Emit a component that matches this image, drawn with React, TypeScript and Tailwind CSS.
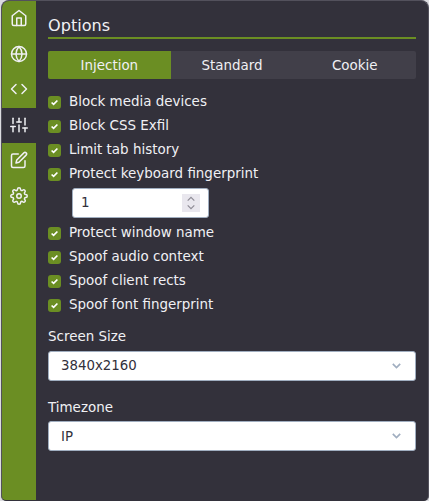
import { FiHome, FiGlobe, FiCode, FiSliders, FiEdit, FiSettings } from "react-icons/fi";

const nav = [FiHome, FiGlobe, FiCode, FiSliders, FiEdit, FiSettings];

function Check({ label }: { label: string }) {
  return (
    <label className="flex h-6 items-center">
      <span className="mt-[2px] flex size-[13px] items-center justify-center rounded-[3px] bg-[#6b8e23]">
        <svg width="7" height="7" viewBox="0 0 7 7" fill="none" stroke="#fff" strokeWidth="1.7">
          <path d="M0.6 3.5 2.6 5.4 6.4 1.5" />
        </svg>
      </span>
      <span className="ml-2 pt-[2px]">{label}</span>
    </label>
  );
}

function Select({ value, textClass = "" }: { value: string; textClass?: string }) {
  return (
    <div className="flex h-[30px] items-center justify-between rounded-[3px] border border-[#a0aec0] bg-white pr-[14px] pl-3 text-[13.33px] text-[#32303b]">
      <span className={textClass}>{value}</span>
      <svg width="9" height="6" viewBox="0 0 9 6" fill="none" stroke="#a0aec0" strokeWidth="1.7">
        <path d="M0.8 0.9 4.5 4.5 8.2 0.9" />
      </svg>
    </div>
  );
}

export default function App() {
  return (
    <div className="h-[501px] w-[429px] bg-[#dcdce0] pl-px font-['DejaVu_Sans',sans-serif] text-[13.45px] leading-[18px] text-[#f0f0f4]">
      <div className="flex h-full overflow-hidden rounded-t-[8px] rounded-b-[5px] border border-[#53515c] border-b-[#33313b] bg-[#33313b]">
        <nav className="w-[34px] shrink-0 bg-[#6b8e23]">
          {nav.map((Icon, i) => (
            <div
              key={i}
              className={"flex h-[35.5px] items-center justify-center pb-px " + (i === 3 ? "bg-[#33313b]" : "")}
            >
              <Icon size={18} />
            </div>
          ))}
        </nav>
        <main className="min-w-0 flex-1 pr-3 pl-3">
          <h1 className="flex h-[38px] items-end border-b-2 border-[#6b8e23] pb-px text-[16.1px] leading-5">Options</h1>
          <div className="mt-3 flex h-7 overflow-hidden rounded-[2px] bg-[#413f49]">
            <div className="flex flex-1 items-center justify-center bg-[#6b8e23] pt-[2px]">Injection</div>
            <div className="flex flex-1 items-center justify-center pt-[2px]">Standard</div>
            <div className="flex flex-1 items-center justify-center pt-[2px]">Cookie</div>
          </div>
          <div className="mt-[10px]">
            <Check label="Block media devices" />
            <Check label="Block CSS Exfil" />
            <Check label="Limit tab history" />
            <Check label="Protect keyboard fingerprint" />
            <div className="mt-[3px] mb-[2px] ml-6 flex h-[30px] w-[137px] items-center justify-between rounded-[3px] border border-[#a0aec0] bg-white px-2 text-[#32303b]">
              <span>1</span>
              <span className="flex h-[18px] w-[18px] items-center justify-center bg-[#e9e7ee]">
                <svg width="8" height="14" viewBox="0 0 8 14" fill="none" stroke="#8e8c96" strokeWidth="1.2">
                  <path d="M0.7 4.7 4 1.4 7.3 4.7M0.7 9.3 4 12.6 7.3 9.3" />
                </svg>
              </span>
            </div>
            <Check label="Protect window name" />
            <Check label="Spoof audio context" />
            <Check label="Spoof client rects" />
            <Check label="Spoof font fingerprint" />
          </div>
          <div className="mt-3 mb-[5px]">Screen Size</div>
          <Select value="3840x2160" />
          <div className="mt-[18px] mb-1">Timezone</div>
          <Select value="IP" textClass="pt-[2px]" />
        </main>
      </div>
    </div>
  );
}
